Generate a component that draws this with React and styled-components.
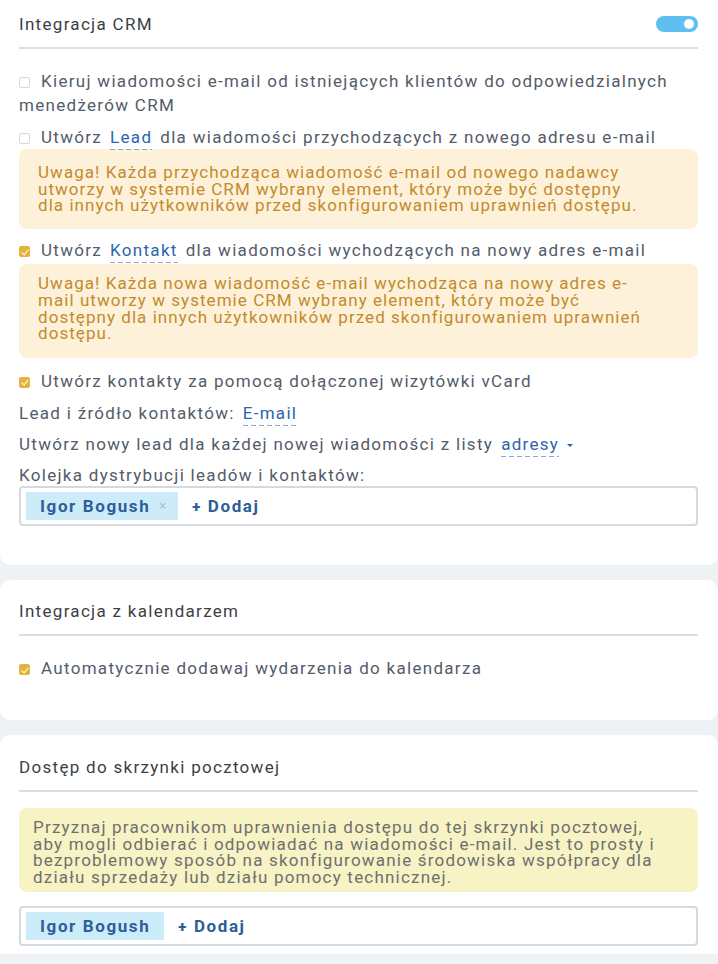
import React from 'react';
import styled, { createGlobalStyle } from 'styled-components';

const Global = createGlobalStyle`
  html, body {
    margin: 0;
    padding: 0;
    background: #eef2f4;
    font-family: Roboto, "Liberation Sans", sans-serif;
  }
`;

const Page = styled.div`
  display: flex;
  flex-direction: column;
  gap: 15px;
  width: 718px;
  height: 964px;
  overflow: hidden;
  margin-top: -10px;
`;

const Card = styled.section`
  background: #fff;
  border-radius: 10px;
  padding: ${(p) => p.$top || '20px'} 20px 0 19px;
  box-sizing: border-box;
  height: ${(p) => p.$h || 'auto'};
  flex-shrink: 0;
`;

const Header = styled.div`
  display: flex;
  align-items: center;
  justify-content: space-between;
  height: 24px;
  padding-bottom: 11px;
  border-bottom: 2px solid #dcdee1;
  font-size: 17px;
  letter-spacing: 1.3px;
  color: #3b3f45;
  margin-bottom: ${(p) => p.$mb || '20px'};
`;

const Toggle = styled.span`
  width: 42px;
  height: 16px;
  border-radius: 8px;
  background: #5ebff0;
  position: relative;
  &::after {
    content: '';
    position: absolute;
    right: 4px;
    top: 3px;
    width: 10px;
    height: 10px;
    border-radius: 50%;
    background: #fff;
  }
`;

const Row = styled.div`
  font-size: 17px;
  letter-spacing: 1.3px;
  line-height: 24px;
  color: #535c69;
  margin-top: ${(p) => p.$mt || '0'};
`;

const Box = styled.span`
  display: inline-block;
  width: 11px;
  height: 11px;
  box-sizing: border-box;
  border-radius: 2px;
  margin-right: 11px;
  vertical-align: -1px;
  border: 1px solid ${(p) => (p.$on ? '#e5b33c' : '#d5d7da')};
  background: ${(p) => (p.$on ? '#e5b33c' : '#fff')};
  position: relative;
  &::after {
    content: '';
    display: ${(p) => (p.$on ? 'block' : 'none')};
    position: absolute;
    left: 3px;
    top: 0.5px;
    width: 3px;
    height: 6px;
    border: solid #fff;
    border-width: 0 1.5px 1.5px 0;
    transform: rotate(40deg);
  }
`;

const Link = styled.span`
  color: #2a66ad;
  padding-bottom: 3px;
  margin: 0 ${(p) => p.$mr || '8px'} 0 8px;
  background: repeating-linear-gradient(to right, #88a8d2 0 5px, transparent 5px 8px) left bottom / 100% 1px no-repeat;
`;

const Caret = styled.span`
  display: inline-block;
  margin-left: 8px;
  border-left: 3px solid transparent;
  border-right: 3px solid transparent;
  border-top: 3px solid #2a66ad;
  vertical-align: 3px;
`;

const Note = styled.div`
  background: ${(p) => (p.$tone === 'grey' ? '#f7f3c4' : '#fef1da')};
  color: ${(p) => (p.$tone === 'grey' ? '#6f6f6f' : '#c28b2c')};
  border-radius: 8px;
  font-size: 17px;
  letter-spacing: ${(p) => (p.$tone === 'grey' ? '1.2px' : '1.05px')};
  line-height: 16.7px;
  white-space: nowrap;
  padding: ${(p) => p.$pad || '15px 19px'};
  margin-top: ${(p) => p.$mt || '0'};
`;

const Field = styled.div`
  display: flex;
  align-items: center;
  gap: 14px;
  height: 40px;
  box-sizing: border-box;
  border: 2px solid #d6d9dd;
  border-radius: 4px;
  padding: 0 5px;
  margin-top: ${(p) => p.$mt || '0'};
`;

const Tag = styled.span`
  display: flex;
  align-items: center;
  gap: 9px;
  height: 28px;
  padding: 0 ${(p) => (p.$removable ? '12px' : '14px')} 0 14px;
  background: #cdecfa;
  color: #2d5e98;
  font-weight: 700;
  font-size: 17px;
  letter-spacing: 1.6px;
`;

const Remove = styled.span`
  color: #a8c4d6;
  font-size: 13px;
  font-weight: 400;
  letter-spacing: 0;
`;

const Add = styled.span`
  color: #2d5e98;
  font-weight: 700;
  font-size: 17px;
  letter-spacing: 1.6px;
  & b {
    font-size: 15px;
    margin-right: 6px;
  }
`;

const App = () => (
  <>
    <Global />
    <Page>
      <Card $top="22px" $h="575px">
        <Header>
          <span>Integracja CRM</span>
          <Toggle />
        </Header>
        <Row>
          <Box />Kieruj wiadomości e-mail od istniejących klientów do odpowiedzialnych menedżerów CRM
        </Row>
        <Row $mt="8px">
          <Box />Utwórz<Link>Lead</Link>dla wiadomości przychodzących z nowego adresu e-mail
        </Row>
        <Note>
          Uwaga! Każda przychodząca wiadomość e-mail od nowego nadawcy<br />
          utworzy w systemie CRM wybrany element, który może być dostępny<br />
          dla innych użytkowników przed skonfigurowaniem uprawnień dostępu.
        </Note>
        <Row $mt="9px">
          <Box $on />Utwórz<Link>Kontakt</Link>dla wiadomości wychodzących na nowy adres e-mail
        </Row>
        <Note $pad="11px 19px 16px" $mt="2px">
          Uwaga! Każda nowa wiadomość e-mail wychodząca na nowy adres e-<br />
          mail utworzy w systemie CRM wybrany element, który może być<br />
          dostępny dla innych użytkowników przed skonfigurowaniem uprawnień<br />
          dostępu.
        </Note>
        <Row $mt="11px">
          <Box $on />Utwórz kontakty za pomocą dołączonej wizytówki vCard
        </Row>
        <Row $mt="8px">
          Lead i źródło kontaktów:<Link>E-mail</Link>
        </Row>
        <Row $mt="7px">
          Utwórz nowy lead dla każdej nowej wiadomości z listy<Link $mr="0">adresy</Link>
          <Caret />
        </Row>
        <Row $mt="7px">Kolejka dystrybucji leadów i kontaktów:</Row>
        <Field $mt="-1px">
          <Tag $removable>
            Igor Bogush<Remove>×</Remove>
          </Tag>
          <Add><b>+</b>Dodaj</Add>
        </Field>
      </Card>

      <Card $top="19px" $h="140px">
        <Header>
          <span>Integracja z kalendarzem</span>
        </Header>
        <Row>
          <Box $on />Automatycznie dodawaj wydarzenia do kalendarza
        </Row>
      </Card>

      <Card $top="20px" $h="240px">
        <Header $mb="16px">
          <span>Dostęp do skrzynki pocztowej</span>
        </Header>
        <Note $tone="grey" $pad="11px 14px 6px">
          Przyznaj pracownikom uprawnienia dostępu do tej skrzynki pocztowej,<br />
          aby mogli odbierać i odpowiadać na wiadomości e-mail. Jest to prosty i<br />
          bezproblemowy sposób na skonfigurowanie środowiska współpracy dla<br />
          działu sprzedaży lub działu pomocy technicznej.
        </Note>
        <Field $mt="14px">
          <Tag>Igor Bogush</Tag>
          <Add><b>+</b>Dodaj</Add>
        </Field>
      </Card>
    </Page>
  </>
);

export default App;
